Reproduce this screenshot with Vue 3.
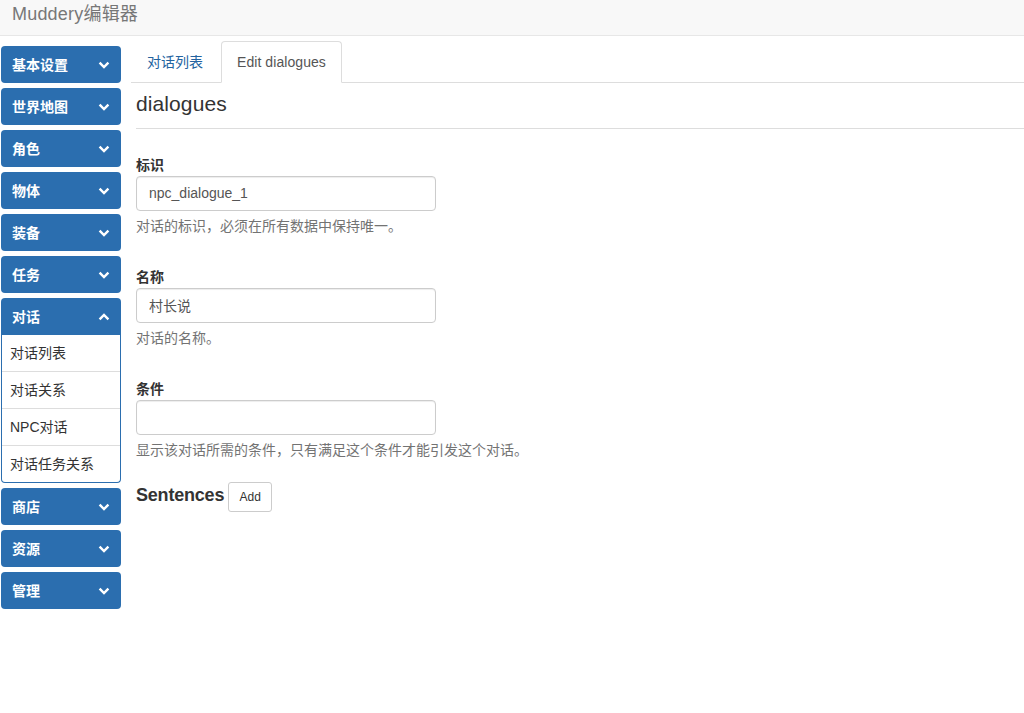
<script setup>
const before = ['基本设置', '世界地图', '角色', '物体', '装备', '任务']
const after = ['商店', '资源', '管理']
const items = ['对话列表', '对话关系', 'NPC对话', '对话任务关系']
const fields = [
  { label: '标识', value: 'npc_dialogue_1', help: '对话的标识，必须在所有数据中保持唯一。' },
  { label: '名称', value: '村长说', help: '对话的名称。' },
  { label: '条件', value: '', help: '显示该对话所需的条件，只有满足这个条件才能引发这个对话。' },
]
</script>

<template>
  <div class="page">
    <header class="navbar"><span class="brand">Muddery编辑器</span></header>
    <div class="body">
      <aside class="sidebar">
        <div v-for="name in before" :key="name" class="menu-head">
          <span>{{ name }}</span>
          <svg class="chev" viewBox="0 0 12 8"><path d="M1.6 1.6 6 6l4.4-4.4" /></svg>
        </div>
        <div class="group">
          <div class="menu-head open">
            <span>对话</span>
            <svg class="chev" viewBox="0 0 12 8"><path d="M1.6 6.4 6 2l4.4 4.4" /></svg>
          </div>
          <ul class="sub">
            <li v-for="item in items" :key="item">{{ item }}</li>
          </ul>
        </div>
        <div v-for="name in after" :key="name" class="menu-head">
          <span>{{ name }}</span>
          <svg class="chev" viewBox="0 0 12 8"><path d="M1.6 1.6 6 6l4.4-4.4" /></svg>
        </div>
      </aside>
      <main class="main">
        <nav class="tabs">
          <a class="tab link">对话列表</a>
          <a class="tab active">Edit dialogues</a>
        </nav>
        <div class="content">
          <h3 class="title">dialogues</h3>
          <form class="form">
            <div v-for="f in fields" :key="f.label" class="field">
              <label class="label">{{ f.label }}</label>
              <input class="input" type="text" :value="f.value" />
              <p class="help">{{ f.help }}</p>
            </div>
          </form>
          <div class="sentences">
            <span class="s-title">Sentences</span>
            <button class="add" type="button">Add</button>
          </div>
        </div>
      </main>
    </div>
  </div>
</template>

<style>
html, body { margin: 0; background: #fff; }
</style>

<style scoped>
.page {
  font-family: "Liberation Sans", "Noto Sans CJK SC", sans-serif;
  font-size: 14px;
  line-height: 20px;
  color: #333;
  height: 713px;
  overflow: hidden;
}
.navbar {
  height: 35px;
  background: #f8f8f8;
  border-bottom: 1px solid #e7e7e7;
  padding-left: 12px;
}
.brand { font-size: 18px; letter-spacing: .2px; line-height: 28px; color: #777; display: block; }
.body { display: flex; }
.sidebar { width: 120px; margin: 10px 0 0 1px; flex: none; }
.menu-head {
  height: 37px;
  box-sizing: border-box;
  background: #2b6eaf;
  border-radius: 4px;
  color: #fff;
  font-weight: bold;
  padding: 0 11px;
  margin-bottom: 5px;
  display: flex;
  align-items: center;
  justify-content: space-between;
}
.chev { width: 12px; height: 8px; fill: none; stroke: #fff; stroke-width: 2.4; }
.group { margin-bottom: 5px; }
.menu-head.open { margin-bottom: 0; border-radius: 4px 4px 0 0; }
.sub {
  list-style: none;
  margin: 0;
  padding: 0;
  border: 1px solid #2b6eaf;
  border-top: 0;
  border-radius: 0 0 4px 4px;
}
.sub li {
  height: 37px;
  box-sizing: border-box;
  padding: 8px 8px;
  border-bottom: 1px solid #ddd;
  color: #333;
}
.sub li:last-child { height: 36px; border-bottom: 0; }
.main { flex: 1; margin-left: 10px; min-width: 0; padding-top: 5px; }
.tabs {
  display: flex;
  height: 42px;
  box-sizing: border-box;
  border-bottom: 1px solid #ddd;
}
.tab { padding: 10px 15px; height: 42px; box-sizing: border-box; border: 1px solid transparent; }
.tab.link { color: #23639f; margin-right: 2px; }
.tab.active {
  background: #fff;
  color: #555;
  border: 1px solid #ddd;
  border-bottom-color: #fff;
  border-radius: 4px 4px 0 0;
  letter-spacing: .07px;
}
.content { padding-left: 5px; }
.title {
  font-size: 21px;
  letter-spacing: .1px;
  font-weight: normal;
  line-height: 22px;
  color: #333;
  margin: 10px 0 0;
  padding-bottom: 13px;
  border-bottom: 1px solid #ddd;
}
.form { padding-top: 28px; }
.field { height: 112px; width: 300px; }
.label { display: block; font-weight: bold; font-size: 14px; line-height: 17px; height: 19px; color: #333; }
.input {
  display: block;
  width: 300px;
  height: 35px;
  box-sizing: border-box;
  border: 1px solid #ccc;
  border-radius: 4px;
  padding: 5px 12px 7px;
  font: inherit;
  color: #555;
  outline: none;
  box-shadow: inset 0 1px 1px rgba(0, 0, 0, .075);
}
.help { margin: 5px 0 0; color: #737373; line-height: 20px; width: 500px; white-space: nowrap; }
.sentences { display: flex; align-items: center; margin-top: -11px; }
.s-title { font-size: 18px; font-weight: bold; letter-spacing: -.2px; line-height: 20px; margin-bottom: 5px; color: #333; margin-right: 4px; }
.add {
  width: 44px;
  height: 30px;
  box-sizing: border-box;
  padding: 0;
  border: 1px solid #ccc;
  border-radius: 3px;
  background: #fff;
  color: #333;
  font: 12px/18px "Liberation Sans", "Noto Sans CJK SC", sans-serif;
}
</style>
